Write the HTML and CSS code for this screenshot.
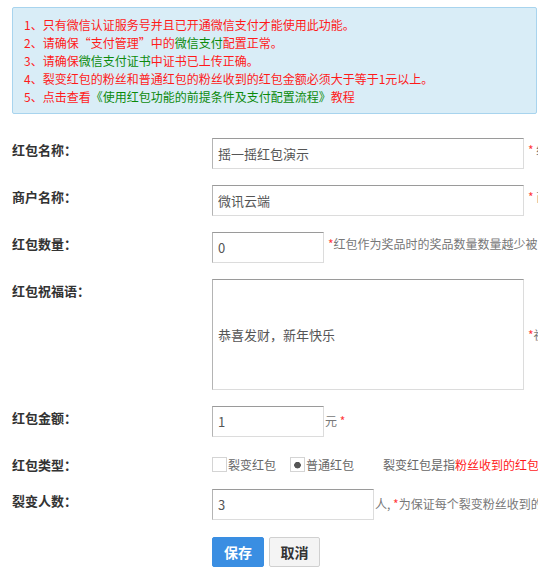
FILE: index.html
```html
<!DOCTYPE html>
<html lang="zh-CN">
<head>
<meta charset="utf-8">
<title>红包设置</title>
<link rel="stylesheet" href="styles.css">
</head>
<body>
<div class="page">
  <div class="alert">
    <p><span class="red">1、只有微信认证服务号并且已开通微信支付才能使用此功能。</span></p>
    <p><span class="red">2、请确保“支付管理”中的</span><span class="green">微信支付</span><span class="red">配置正常。</span></p>
    <p><span class="red">3、请确保</span><span class="green">微信支付证书</span><span class="red">中证书已上传正确。</span></p>
    <p><span class="red">4、裂变红包的粉丝和普通红包的粉丝收到的红包金额必须大于等于1元以上。</span></p>
    <p><span class="red">5、点击查看</span><span class="green">《使用红包功能的前提条件及支付配置流程》</span><span class="red">教程</span></p>
  </div>

  <form class="form">
    <div class="row">
      <label class="label">红包名称：</label>
      <div class="field">
        <input class="input w-lg" type="text" value="摇一摇红包演示">
        <span class="hint"><span class="star">*</span> 红包名称</span>
      </div>
    </div>

    <div class="row">
      <label class="label">商户名称：</label>
      <div class="field">
        <input class="input w-lg" type="text" value="微讯云端">
        <span class="hint"><span class="star">*</span> 商户名称</span>
      </div>
    </div>

    <div class="row">
      <label class="label">红包数量：</label>
      <div class="field">
        <input class="input w-sm" type="text" value="0">
        <span class="hint"><span class="star">*</span>红包作为奖品时的奖品数量数量越少被</span>
      </div>
    </div>

    <div class="row">
      <label class="label">红包祝福语：</label>
      <div class="field field-mid">
        <textarea class="textarea w-lg">恭喜发财，新年快乐</textarea>
        <span class="hint hint-mid"><span class="star">*</span>祝福语</span>
      </div>
    </div>

    <div class="row">
      <label class="label">红包金额：</label>
      <div class="field">
        <input class="input w-sm" type="text" value="1">
        <span class="unit">元 <span class="star">*</span></span>
      </div>
    </div>

    <div class="row row-radio">
      <label class="label">红包类型：</label>
      <div class="field radios">
        <label class="opt"><input class="check" type="checkbox">裂变红包</label>
        <label class="opt"><input class="radio" type="radio" name="type" checked>普通红包</label>
        <span class="type-hint">裂变红包是指<span class="red">粉丝收到的红包可</span></span>
      </div>
    </div>

    <div class="row">
      <label class="label">裂变人数：</label>
      <div class="field">
        <input class="input w-md" type="text" value="3">
        <span class="unit">人, <span class="star">*</span>为保证每个裂变粉丝收到的</span>
      </div>
    </div>

    <div class="actions">
      <button class="btn btn-primary" type="button">保存</button>
      <button class="btn btn-default" type="button">取消</button>
    </div>
  </form>
</div>
</body>
</html>
```

FILE: styles.css
```css
html, body {
  margin: 0;
  padding: 0;
  background: #fff;
  overflow: hidden;
}

body {
  font-family: "Noto Sans CJK SC", "Microsoft YaHei", sans-serif;
  font-size: 12px;
  color: #333;
}

.page {
  padding: 7px 1px 0 12px;
  width: 538px;
  box-sizing: border-box;
}

.alert {
  background: #d9edf7;
  border: 1px solid #a8d4ee;
  border-radius: 2px;
  padding: 8px 8px 7px 11px;
}

.alert p {
  margin: 0;
  line-height: 18px;
  font-size: 12px;
  white-space: nowrap;
}

.red { color: #ff1a1a; }
.green { color: #0b8a0b; }

.form {
  margin-top: 24px;
  display: flex;
  flex-direction: column;
  gap: 16px;
}

.row {
  display: flex;
  align-items: flex-start;
  white-space: nowrap;
}

.label {
  width: 200px;
  flex-shrink: 0;
  font-size: 13px;
  font-weight: bold;
  line-height: 23px;
  color: #333;
}

.field {
  display: flex;
  align-items: flex-start;
  white-space: nowrap;
}

.field-mid {
  align-items: center;
}

.input, .textarea {
  box-sizing: border-box;
  border: 1px solid;
  border-color: #9a9a9a #dcdcdc #dcdcdc #b4b4b4;
  padding: 0 5px;
  margin: 0;
  font-family: inherit;
  font-size: 13px;
  color: #555;
  background: #fff;
  outline: none;
  border-radius: 0;
}

.input {
  height: 31px;
  line-height: 29px;
}

.textarea {
  height: 111px;
  padding: 45px 5px 44px;
  line-height: 20px;
  resize: none;
  overflow: hidden;
  display: block;
}

.w-lg { width: 312px; }
.w-sm { width: 112px; }
.w-md { width: 162px; }

.hint {
  margin-left: 4px;
  line-height: 23px;
  font-size: 12px;
  color: #777;
}

.hint-mid {
  line-height: 20px;
}

.star {
  color: #ff3b3b;
}

.unit {
  margin-left: 1px;
  font-size: 12px;
  color: #777;
  line-height: 29px;
}

.row-radio {
  height: 20px;
}

.radios {
  align-items: center;
  height: 23px;
  font-size: 12px;
  color: #666;
}

.opt {
  display: flex;
  align-items: center;
  margin-right: 14px;
}

.opt + .opt {
  margin-right: 29px;
}

.check, .radio {
  -webkit-appearance: none;
  appearance: none;
  width: 15px;
  height: 15px;
  margin: 0 1px 0 0;
  border: 1px solid #d4d4d4;
  background: #fff;
  border-radius: 0;
  box-sizing: border-box;
}

.radio:checked {
  background: radial-gradient(circle at 50% 55%, #555 0 3px, #fff 3.6px);
}

.type-hint {
  color: #666;
}

.actions {
  padding-left: 200px;
  margin-top: 1px;
  display: flex;
  gap: 5px;
}

.btn {
  height: 30px;
  padding: 0;
  white-space: nowrap;
  font-family: inherit;
  font-size: 14px;
  font-weight: bold;
  border-radius: 2px;
  border: 1px solid;
  cursor: pointer;
}

.btn-primary {
  width: 52px;
  background: #3a8ee2;
  border-color: #3a8ee2;
  color: #fff;
}

.btn-default {
  width: 51px;
  background: #f4f4f4;
  border-color: #d0d0d0;
  color: #333;
}
```
